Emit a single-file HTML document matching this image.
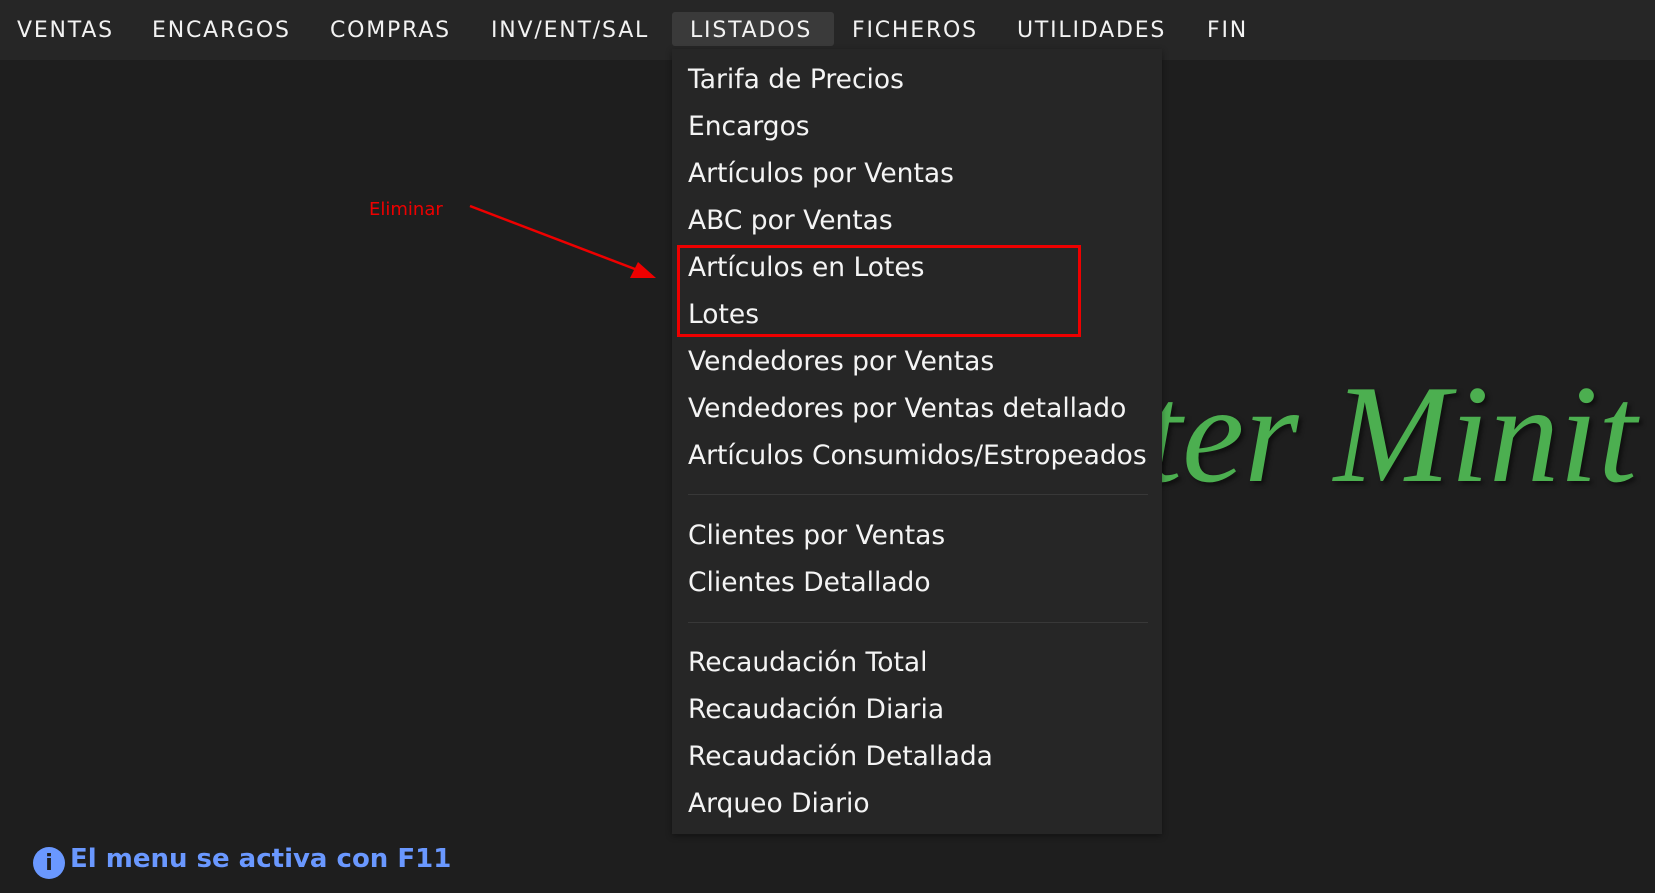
<!DOCTYPE html>
<html><head><meta charset="utf-8"><style>
*{margin:0;padding:0;box-sizing:border-box}
body{width:1655px;height:893px;background:#1e1e1e;position:relative;overflow:hidden;font-family:"DejaVu Sans","Liberation Sans",sans-serif;color:#fff}
.bar{position:absolute;left:0;top:0;width:1655px;height:60px;background:#262626}
.m{position:absolute;top:17px;font-size:22px;letter-spacing:1.8px;line-height:28px;color:#f2f2f2}
.hl{position:absolute;left:672px;top:12px;width:162px;height:34px;background:#3a3a3a;border-radius:3px}
.logo{position:absolute;right:18px;top:355px;font-family:"Liberation Serif",serif;font-style:italic;font-size:140px;color:#4caf50;text-shadow:3px 3px 4px rgba(0,0,0,.5);white-space:nowrap;line-height:160px}
.dd{position:absolute;left:672px;top:49px;width:490px;height:785px;background:#262626;box-shadow:0 2px 6px rgba(0,0,0,.4)}
.i{position:absolute;left:16px;font-size:26.5px;line-height:47px;white-space:nowrap;color:#f4f4f4}
.sep{position:absolute;left:16px;width:460px;height:1px;background:#383838}
.red{position:absolute;left:677px;top:245px;width:404px;height:92px;border:3px solid #e00}
.elim{position:absolute;left:369px;top:199px;font-size:18px;color:#e00}
.foot{position:absolute;left:70px;top:844px;font-size:26px;font-weight:bold;color:#6a98ff;white-space:nowrap}
.ic{position:absolute;left:33px;top:847px;width:32px;height:32px;border-radius:50%;background:#6a98ff;color:#1e1e1e;font-weight:bold;font-size:22px;text-align:center;line-height:34px}
</style></head><body>
<div class="bar"></div>
<div class="hl"></div>
<div class="m" style="left:17px">VENTAS</div>
<div class="m" style="left:152px">ENCARGOS</div>
<div class="m" style="left:330px">COMPRAS</div>
<div class="m" style="left:491px">INV/ENT/SAL</div>
<div class="m" style="left:690px">LISTADOS</div>
<div class="m" style="left:852px">FICHEROS</div>
<div class="m" style="left:1017px">UTILIDADES</div>
<div class="m" style="left:1207px">FIN</div>
<div class="logo">Master Minit</div>
<div class="dd">
<div class="i" style="top:7px">Tarifa de Precios</div>
<div class="i" style="top:54px">Encargos</div>
<div class="i" style="top:101px">Artículos por Ventas</div>
<div class="i" style="top:148px">ABC por Ventas</div>
<div class="i" style="top:195px">Artículos en Lotes</div>
<div class="i" style="top:242px">Lotes</div>
<div class="i" style="top:289px">Vendedores por Ventas</div>
<div class="i" style="top:336px">Vendedores por Ventas detallado</div>
<div class="i" style="top:383px">Artículos Consumidos/Estropeados</div>
<div class="sep" style="top:445px"></div>
<div class="i" style="top:463px">Clientes por Ventas</div>
<div class="i" style="top:510px">Clientes Detallado</div>
<div class="sep" style="top:573px"></div>
<div class="i" style="top:590px">Recaudación Total</div>
<div class="i" style="top:637px">Recaudación Diaria</div>
<div class="i" style="top:684px">Recaudación Detallada</div>
<div class="i" style="top:731px">Arqueo Diario</div>
</div>
<div class="red"></div>
<div class="elim">Eliminar</div>
<svg style="position:absolute;left:0;top:0" width="1655" height="893"><line x1="470" y1="206" x2="640" y2="271" stroke="#e00" stroke-width="2.5"/><polygon points="656,278 630,278 638,262" fill="#e00"/></svg>
<div class="ic">i</div>
<div class="foot">El menu se activa con F11</div>
</body></html>
